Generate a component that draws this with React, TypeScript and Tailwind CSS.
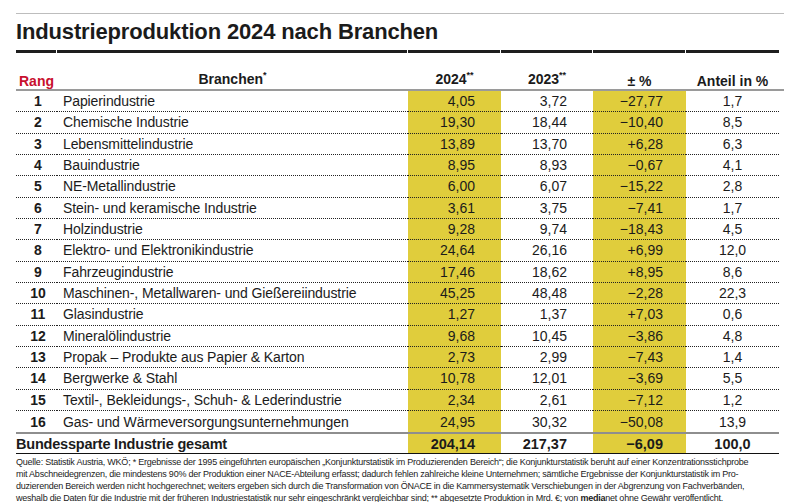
import React from "react";

type Row = {
  rank: number;
  name: string;
  y2024: string;
  y2023: string;
  delta: string;
  share: string;
};

const ROWS: Row[] = [
  { rank: 1, name: "Papierindustrie", y2024: "4,05", y2023: "3,72", delta: "−27,77", share: "1,7" },
  { rank: 2, name: "Chemische Industrie", y2024: "19,30", y2023: "18,44", delta: "−10,40", share: "8,5" },
  { rank: 3, name: "Lebensmittelindustrie", y2024: "13,89", y2023: "13,70", delta: "+6,28", share: "6,3" },
  { rank: 4, name: "Bauindustrie", y2024: "8,95", y2023: "8,93", delta: "−0,67", share: "4,1" },
  { rank: 5, name: "NE-Metallindustrie", y2024: "6,00", y2023: "6,07", delta: "−15,22", share: "2,8" },
  { rank: 6, name: "Stein- und keramische Industrie", y2024: "3,61", y2023: "3,75", delta: "−7,41", share: "1,7" },
  { rank: 7, name: "Holzindustrie", y2024: "9,28", y2023: "9,74", delta: "−18,43", share: "4,5" },
  { rank: 8, name: "Elektro- und Elektronikindustrie", y2024: "24,64", y2023: "26,16", delta: "+6,99", share: "12,0" },
  { rank: 9, name: "Fahrzeugindustrie", y2024: "17,46", y2023: "18,62", delta: "+8,95", share: "8,6" },
  { rank: 10, name: "Maschinen-, Metallwaren- und Gießereiindustrie", y2024: "45,25", y2023: "48,48", delta: "−2,28", share: "22,3" },
  { rank: 11, name: "Glasindustrie", y2024: "1,27", y2023: "1,37", delta: "+7,03", share: "0,6" },
  { rank: 12, name: "Mineralölindustrie", y2024: "9,68", y2023: "10,45", delta: "−3,86", share: "4,8" },
  { rank: 13, name: "Propak – Produkte aus Papier & Karton", y2024: "2,73", y2023: "2,99", delta: "−7,43", share: "1,4" },
  { rank: 14, name: "Bergwerke & Stahl", y2024: "10,78", y2023: "12,01", delta: "−3,69", share: "5,5" },
  { rank: 15, name: "Textil-, Bekleidungs-, Schuh- & Lederindustrie", y2024: "2,34", y2023: "2,61", delta: "−7,12", share: "1,2" },
  { rank: 16, name: "Gas- und Wärmeversorgungsunternehmungen", y2024: "24,95", y2023: "30,32", delta: "−50,08", share: "13,9" },
];

const COLS = "grid grid-cols-[41px_351px_93px_92px_93px_93px]";
const YELLOW = "bg-[#e0cd3c]";

function DataRow({ row, last }: { row: Row; last: boolean }) {
  const line = last ? "" : "border-b border-dotted border-[#222]";
  return (
    <div className={`${COLS} h-[21.33px] text-[14px] leading-none`}>
      <div className={`flex items-center justify-center pl-[3px] font-bold ${line}`}>{row.rank}</div>
      <div className={`flex items-center pl-[6px] tracking-[-0.1px] ${line}`}>{row.name}</div>
      <div className={`flex items-center justify-end pr-[26px] ${YELLOW} ${line}`}>{row.y2024}</div>
      <div className={`flex items-center justify-end pr-[26px] ${line}`}>{row.y2023}</div>
      <div className={`flex items-center justify-end pr-[23px] ${YELLOW} ${line}`}>{row.delta}</div>
      <div className={`flex items-center justify-center ${line}`}>{row.share}</div>
    </div>
  );
}

function HeadCell({ children, stars }: { children: React.ReactNode; stars?: string }) {
  return (
    <div className="flex items-end justify-center pb-px">
      <span>
        {children}
        {stars && <span className="relative -top-[6px] text-[9px]">{stars}</span>}
      </span>
    </div>
  );
}

export default function App() {
  return (
    <div
      className="w-[800px] h-[502px] overflow-hidden bg-white px-4 pt-[13px] text-[#1b1b1b]"
      style={{ fontFamily: '"Liberation Sans", Arial, sans-serif' }}
    >
      <div className="h-px bg-[#bdbdbd]" />
      <h1 className="h-[36px] text-[22px] leading-[35px] font-bold tracking-[-0.15px] text-[#1b1b1b]">
        Industrieproduktion 2024 nach Branchen
      </h1>
      <div className={`${COLS} h-[3px]`}>
        {[0, 1, 2, 3, 4, 5].map((i) => (
          <div key={i} className={`bg-[#1e1e1e] ${i < 5 ? "mr-px" : ""}`} />
        ))}
      </div>

      {/* header */}
      <div className={`${COLS} h-[38px] border-b-2 border-[#9a9a9a] text-[14px] font-bold leading-[14px]`}>
        <div className="flex items-end pb-px pl-[3px] text-[#c8102e]">Rang</div>
        <HeadCell stars="*">Branchen</HeadCell>
        <HeadCell stars="**">2024</HeadCell>
        <HeadCell stars="**">2023</HeadCell>
        <HeadCell>± %</HeadCell>
        <HeadCell>Anteil in %</HeadCell>
      </div>

      {ROWS.map((r, i) => (
        <DataRow key={r.rank} row={r} last={i === ROWS.length - 1} />
      ))}

      {/* total */}
      <div className={`${COLS} h-[22px] text-[14.5px] font-bold leading-none`}>
        <div className="col-span-2 flex items-center border-t-2 border-b border-t-[#8e8e8e] border-b-[#111] tracking-[-0.2px]">
          Bundessparte Industrie gesamt
        </div>
        <div className={`flex items-center justify-end pr-[26px] border-t-2 border-b border-t-[#8e8e8e] border-b-[#111] ${YELLOW}`}>
          204,14
        </div>
        <div className="flex items-center justify-end pr-[26px] border-t-2 border-b border-t-[#8e8e8e] border-b-[#111]">
          217,37
        </div>
        <div className={`flex items-center justify-end pr-[23px] border-t-2 border-b border-t-[#8e8e8e] border-b-[#111] ${YELLOW}`}>
          −6,09
        </div>
        <div className="flex items-center justify-center border-t-2 border-b border-t-[#8e8e8e] border-b-[#111]">
          100,0
        </div>
      </div>

      {/* footnote */}
      <div className="pt-[3px] text-[9px] leading-[11.8px] tracking-[-0.23px] whitespace-nowrap text-[#1b1b1b]">
        <div>
          Quelle: Statistik Austria, WKÖ; * Ergebnisse der 1995 eingeführten europäischen „Konjunkturstatistik im Produzierenden Bereich“; die Konjunkturstatistik beruht auf einer Konzentrationsstichprobe
        </div>
        <div>
          mit Abschneidegrenzen, die mindestens 90% der Produktion einer NACE-Abteilung erfasst; dadurch fehlen zahlreiche kleine Unternehmen; sämtliche Ergebnisse der Konjunkturstatistik im Pro-
        </div>
        <div>
          duzierenden Bereich werden nicht hochgerechnet; weiters ergeben sich durch die Transformation von ÖNACE in die Kammersystematik Verschiebungen in der Abgrenzung von Fachverbänden,
        </div>
        <div>
          weshalb die Daten für die Industrie mit der früheren Industriestatistik nur sehr eingeschränkt vergleichbar sind; ** abgesetzte Produktion in Mrd. €; von <span className="font-bold">media</span>net ohne Gewähr veröffentlicht.
        </div>
      </div>
    </div>
  );
}
